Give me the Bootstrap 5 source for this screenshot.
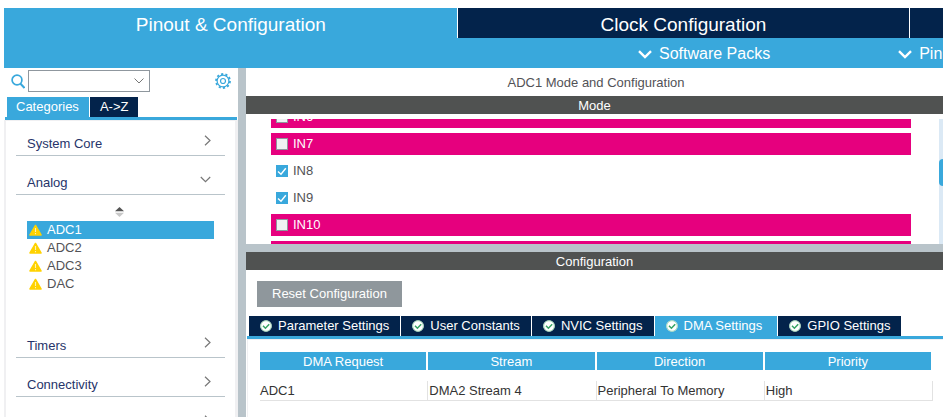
<!DOCTYPE html>
<html lang="en">
<head>
<meta charset="utf-8">
<meta name="viewport" content="width=device-width, initial-scale=1">
<title>Pinout &amp; Configuration</title>
<link href="https://cdn.jsdelivr.net/npm/bootstrap@5.3.0/dist/css/bootstrap.min.css" rel="stylesheet">
<style>
  :root { --sky:#39a8dc; --navy:#03234b; --pink:#e6007e; --bar:#505251; --split:#b9c4ca; --edge:#f0f0f2; --ink:#525256; }
  body { font-family:"Liberation Sans", Arial, sans-serif; font-size:13px; line-height:18px; color:var(--ink); background:#fff; }
  button { font:inherit; border:0; border-radius:0; }
  svg { display:block; flex:none; }
  .app-shell { padding:8px 0 0; }
  .app-head { margin-left:4px; background:var(--sky); color:#fff; }
  .main-tab { flex:0 0 48.2%; height:30px; padding:3px 0 0; font-size:19px; line-height:26px; color:#fff; background:var(--navy); border-left:1px solid #fff; }
  .main-tab.is-current { background:var(--sky); border-left-color:var(--sky); }
  .sub-menu { height:30px; gap:128px; padding:2px 0 0 634px; }
  .sub-menu button { font-size:16px; line-height:28px; color:#fff; background:none; padding:0; gap:7px; flex:none; }
  .side-pane { flex:0 0 238px; }
  .v-split { flex:0 0 8px; background:var(--split); }
  .h-split { flex:0 0 8px; background:var(--split); }
  .search-line { height:29px; padding:2px 7px 0 11px; gap:3px; }
  .form-select.find-box { width:122px; height:22px; padding:0 18px 0 4px; border:1px solid #8f979e; border-radius:0; font-size:13px; line-height:18px;
    background:#fff url("data:image/svg+xml,%3Csvg xmlns='http://www.w3.org/2000/svg' viewBox='0 0 10 6'%3E%3Cpath d='M.5.5 5 5 9.500.5' fill='none' stroke='%23777'/%3E%3C/svg%3E") no-repeat right 5px center / 10px 6px; }
  .side-tabs { padding-left:7px; gap:1px; }
  .side-tabs button { height:20px; padding:0 10px; color:#fff; background:var(--navy); }
  .side-tabs button.is-current { background:var(--sky); padding:0 10px 0 9px; }
  .side-rule { height:3px; margin:0 1px 0 5px; background:var(--sky); }
  .side-box { margin-left:4px; border:solid var(--edge); border-width:1px 3px 0 2px; padding:0 10px; }
  .group-row { width:100%; height:39px; padding:16px 14px 0 11px; background:none; color:#26346a; border-bottom:1px solid var(--split); }
  .group-row.is-first { height:35px; padding-top:12px; }
  .group-row .chev { margin-top:-7px; }
  .group-items { padding:12px 11px 26px; }
  .sorter { margin:0 auto 4px; padding:0 2px 0 0; background:none; }
  .item { width:100%; height:18px; padding:0 2px; gap:5px; color:var(--ink); background:none; }
  .item.is-current { background:var(--sky); color:#fff; }
  .pane-title { height:28px; padding:6px 0 0 3px; }
  .dark-bar { height:18px; line-height:20px; background:var(--bar); color:#fff; text-align:center; }
  .mode-view { height:125px; margin-top:5px; overflow:hidden; }
  .channels { margin:-13px 28px 0 25px; gap:5px; }
  .channel { height:22px; padding-left:5px; gap:5px; flex:none; }
  .channel.is-off { background:var(--pink); color:#fff; }
  .form-check-input.tick { width:12px; height:12px; margin:0; border:1px solid #8f979e; border-radius:0; background-color:#f0f1f3; flex:none; }
  .form-check-input.tick:checked { border-color:var(--sky); background:var(--sky) url("data:image/svg+xml,%3Csvg xmlns='http://www.w3.org/2000/svg' viewBox='0 0 12 12'%3E%3Cpath d='M2 6.500 5 9.200 9.800 3.200' fill='none' stroke='%23fff' stroke-width='1.400'/%3E%3C/svg%3E") center / 12px 12px; }
  .track { flex:0 0 4px; padding-top:40px; background:#dbe9f5; }
  .thumb { height:27px; border-radius:4px 0 0 4px; background:var(--sky); }
  .reset-btn { margin:11px 0 9px 11px; height:26px; padding:0 15px; background:#8f979c; color:#fff; }
  .set-tabs { margin-left:1px; padding-left:2px; gap:1px; border-bottom:3px solid var(--sky); }
  .set-tabs button { height:20px; padding:0 11px; gap:6px; color:#fff; background:var(--navy); white-space:nowrap; }
  .set-tabs button.is-current { background:var(--sky); padding-right:15px; }
  .set-body { margin-left:1px; border:solid var(--edge); border-width:1px 0 0 1px; padding:12px 10px 0 12px; }
  .dma { width:100%; table-layout:fixed; border-collapse:separate; border-spacing:0; color:#333; }
  .dma th { height:29px; padding:1px 0 0; line-height:17px; font-weight:400; text-align:center; color:#fff; background:var(--sky); background-clip:padding-box; border:solid #fff; border-width:0 2px 11px 0; }
  .dma td { height:20px; padding:0; border:solid #e2e2e2; border-width:0 1px 1px 0; }
  .dma td + td { padding-left:1px; }
</style>
<script src="https://cdn.jsdelivr.net/npm/bootstrap@5.3.0/dist/js/bootstrap.bundle.min.js"></script>
</head>
<body>
<svg width="0" height="0" class="position-absolute" aria-hidden="true">
  <symbol id="ok" viewBox="0 0 12 12"><circle cx="6" cy="6" r="5.800" fill="#fff"/><circle cx="6" cy="6" r="5.300" fill="none" stroke="#8fd0a8" stroke-width=".8"/><path d="M3 5.800 5.400 8.200 9.200 4.200" fill="none" stroke="#35a463" stroke-width="1.500"/></symbol>
  <symbol id="warn" viewBox="0 0 13 12"><path d="M6.500 1.500 12 11H1Z" fill="#ffd200" stroke="#ffd200" stroke-width="1.500" stroke-linejoin="round"/><path d="M6.500 4v4M6.500 9v1.200" stroke="#fff3b0" stroke-width="1.100"/></symbol>
  <symbol id="right" viewBox="0 0 7 11"><path d="M1 .8 6 5.500 1 10.200" fill="none" stroke="#777" stroke-width="1.200"/></symbol>
  <symbol id="menu" viewBox="0 0 14 9"><path d="M1 1.200 7 7 13 1.200" fill="none" stroke="#fff" stroke-width="2.400"/></symbol>
</svg>
<div class="app-shell vh-100 d-flex flex-column overflow-hidden">
  <header class="app-head flex-shrink-0 overflow-hidden">
    <nav class="d-flex">
      <button class="main-tab is-current">Pinout &amp; Configuration</button>
      <button class="main-tab">Clock Configuration</button>
      <button class="main-tab" aria-label="Project Manager"></button>
    </nav>
    <div class="sub-menu d-flex">
      <button class="d-flex align-items-center"><svg width="14" height="9"><use href="#menu"/></svg>Software Packs</button>
      <button class="d-flex align-items-center"><svg width="14" height="9"><use href="#menu"/></svg>Pin</button>
    </div>
  </header>
  <div class="d-flex flex-grow-1 overflow-hidden">
    <aside class="side-pane overflow-hidden">
      <div class="search-line d-flex align-items-start">
        <label for="find" class="pt-1"><svg width="14" height="15" viewBox="0 0 14 15" role="img" aria-label="Search"><circle cx="6" cy="6" r="4.900" fill="none" stroke="#39a8dc" stroke-width="1.700"/><path d="m9.500 9.700 4 4.300" stroke="#39a8dc" stroke-width="2"/></svg></label>
        <select id="find" class="form-select find-box"><option></option></select>
        <button class="ms-auto p-0 bg-transparent" aria-label="Settings"><svg width="16" height="22" viewBox="-8 -11 16 22" fill="none" stroke="#39a8dc"><circle r="7" stroke-width="1.800" stroke-dasharray="2.199 2.199"/><circle r="5.900" stroke-width="1.200"/><circle r="2.500" stroke-width="1.200"/></svg></button>
      </div>
      <div class="side-tabs d-flex"><button class="is-current">Categories</button><button>A-&gt;Z</button></div>
      <div class="side-rule"></div>
      <div class="side-box">
        <button class="group-row is-first d-flex align-items-center justify-content-between">System Core<svg class="chev" width="7" height="11"><use href="#right"/></svg></button>
        <button class="group-row d-flex align-items-center justify-content-between">Analog<svg class="chev" width="11" height="7" viewBox="0 0 11 7"><path d="M.8 1 5.500 5.700 10.200 1" fill="none" stroke="#777" stroke-width="1.200"/></svg></button>
        <div class="group-items">
          <button class="sorter d-block" aria-label="Sort"><svg width="9" height="10" viewBox="0 0 9 10"><path d="M4.500 0 9 4.300H0Z" fill="#555"/><path d="M4.500 10 0 5.700h9Z" fill="#c8c8c8"/></svg></button>
          <button class="item is-current d-flex align-items-center"><svg width="13" height="12"><use href="#warn"/></svg>ADC1</button>
          <button class="item d-flex align-items-center"><svg width="13" height="12"><use href="#warn"/></svg>ADC2</button>
          <button class="item d-flex align-items-center"><svg width="13" height="12"><use href="#warn"/></svg>ADC3</button>
          <button class="item d-flex align-items-center"><svg width="13" height="12"><use href="#warn"/></svg>DAC</button>
        </div>
        <button class="group-row d-flex align-items-center justify-content-between">Timers<svg class="chev" width="7" height="11"><use href="#right"/></svg></button>
        <button class="group-row d-flex align-items-center justify-content-between">Connectivity<svg class="chev" width="7" height="11"><use href="#right"/></svg></button>
        <button class="group-row d-flex align-items-center justify-content-between" aria-label="Multimedia"><span></span><svg class="chev" width="7" height="11"><use href="#right"/></svg></button>
      </div>
    </aside>
    <div class="v-split"></div>
    <main class="flex-grow-1 d-flex flex-column overflow-hidden">
      <div class="pane-title text-center">ADC1 Mode and Configuration</div>
      <div class="dark-bar">Mode</div>
      <div class="mode-view d-flex flex-shrink-0">
        <div class="channels d-flex flex-column flex-grow-1">
          <div class="channel is-off d-flex align-items-center"><input class="form-check-input tick" type="checkbox" id="in6"><label for="in6">IN6</label></div>
          <div class="channel is-off d-flex align-items-center"><input class="form-check-input tick" type="checkbox" id="in7"><label for="in7">IN7</label></div>
          <div class="channel d-flex align-items-center"><input class="form-check-input tick" type="checkbox" id="in8" checked><label for="in8">IN8</label></div>
          <div class="channel d-flex align-items-center"><input class="form-check-input tick" type="checkbox" id="in9" checked><label for="in9">IN9</label></div>
          <div class="channel is-off d-flex align-items-center"><input class="form-check-input tick" type="checkbox" id="in10"><label for="in10">IN10</label></div>
          <div class="channel is-off"></div>
        </div>
        <div class="track"><div class="thumb"></div></div>
      </div>
      <div class="h-split"></div>
      <div class="dark-bar">Configuration</div>
      <div><button class="reset-btn d-block">Reset Configuration</button></div>
      <div class="set-tabs d-flex">
        <button class="d-flex align-items-center"><svg width="12" height="12"><use href="#ok"/></svg>Parameter Settings</button>
        <button class="d-flex align-items-center"><svg width="12" height="12"><use href="#ok"/></svg>User Constants</button>
        <button class="d-flex align-items-center"><svg width="12" height="12"><use href="#ok"/></svg>NVIC Settings</button>
        <button class="is-current d-flex align-items-center"><svg width="12" height="12"><use href="#ok"/></svg>DMA Settings</button>
        <button class="d-flex align-items-center"><svg width="12" height="12"><use href="#ok"/></svg>GPIO Settings</button>
      </div>
      <div class="set-body flex-grow-1">
        <table class="dma">
          <thead><tr><th>DMA Request</th><th>Stream</th><th>Direction</th><th>Priority</th></tr></thead>
          <tbody><tr><td>ADC1</td><td>DMA2 Stream 4</td><td>Peripheral To Memory</td><td>High</td></tr></tbody>
        </table>
      </div>
    </main>
  </div>
</div>
</body>
</html>
